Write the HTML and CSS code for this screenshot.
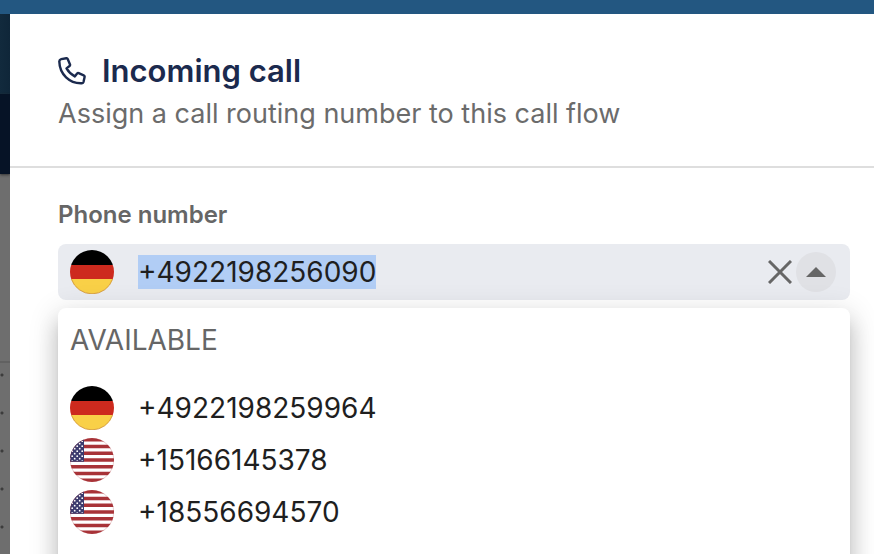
FILE: index.html
```html
<!DOCTYPE html>
<html lang="en">
<head>
<meta charset="utf-8">
<meta name="viewport" content="width=device-width, initial-scale=1">
<title>Incoming call</title>
<link rel="stylesheet" href="styles.css">
</head>
<body>
<svg class="defs" aria-hidden="true">
  <defs>
    <clipPath id="disc"><circle cx="22" cy="22" r="22"/></clipPath>
    <pattern id="stars" width="5" height="5" patternUnits="userSpaceOnUse" patternTransform="translate(1 2)">
      <rect width="5" height="5" fill="#3c3b6e"/>
      <circle cx="1.2" cy="1.2" r=".9" fill="#fff"/>
      <circle cx="3.7" cy="3.7" r=".9" fill="#fff"/>
    </pattern>
    <symbol id="flag-de" viewBox="0 0 44 44">
      <g clip-path="url(#disc)">
        <path fill="#000" d="M0 0h44v15H0z"/>
        <path fill="#cd2a1e" d="M0 15h44v14H0z"/>
        <path fill="#f9d047" d="M0 29h44v15H0z"/>
      </g>
      <path fill="none" stroke="#c98a3c" stroke-width=".7" d="M1.4 29A21.7 21.7 0 0 0 42.6 29"/>
    </symbol>
    <symbol id="flag-us" viewBox="0 0 44 44">
      <g clip-path="url(#disc)">
        <path fill="#fff" d="M0 0h44v44H0z"/>
        <path stroke="#a83338" stroke-width="3.38" d="M0 1.7h44M0 8.5h44M0 15.2h44M0 22h44M0 28.8h44M0 35.5h44M0 42.3h44"/>
        <path fill="#3c3b6e" d="M0 0h14v23.7H0z"/>
        <path fill="url(#stars)" d="M0 3h13v20H0z"/>
      </g>
      <circle cx="22" cy="22" r="21.7" fill="none" stroke="#a83338" stroke-opacity=".4" stroke-width=".6"/>
    </symbol>
  </defs>
</svg>

<div class="topbar"></div>
<div class="stage">
  <div class="backdrop">
    <div class="backdrop-header"></div>
    <div class="backdrop-subheader"></div>
    <div class="backdrop-toolbar"></div>
    <div class="backdrop-canvas"></div>
  </div>
  <main class="panel">
    <header class="panel-header">
      <h1 class="title">
        <svg class="phone" viewBox="0 0 28 28" aria-hidden="true"><path d="M3.2 2.1 8.3 1.2Q9.3 1.1 9.7 2.1L12 7.4Q12.3 8.3 11.5 9L8.5 11.4Q11.6 16.7 16.8 19.4L19.1 16.5Q19.8 15.8 20.7 16.2L25.7 18.4Q26.8 18.9 26.6 19.9L25.5 25Q25.2 26.2 24 26.2C11.5 26.8 1.6 17.2 1.3 4.4Q1.4 2.5 3.2 2.1Z"/></svg>
        <span>Incoming call</span>
      </h1>
      <p class="subtitle">Assign a call routing number to this call flow</p>
    </header>
    <section class="panel-body">
      <label class="label" for="number">Phone number</label>
      <div class="combo">
        <div class="field">
          <svg class="flag" aria-hidden="true"><use href="#flag-de"/></svg>
          <input class="input" id="number" type="text" role="combobox" aria-expanded="true" aria-controls="numbers" autocomplete="off" spellcheck="false" value="+4922198256090">
          <button class="clear" type="button" aria-label="Clear"><svg viewBox="0 0 24 24"><path d="M1 1l22 22M23 1 1 23"/></svg></button>
          <button class="toggle" type="button" aria-label="Close"><svg viewBox="0 0 20 10"><path d="M0 10 10 0l10 10z"/></svg></button>
        </div>
        <div class="menu">
          <div class="group" id="group">AVAILABLE</div>
          <ul class="options" id="numbers" role="listbox" aria-labelledby="group">
            <li class="option" role="option"><svg class="flag" aria-hidden="true"><use href="#flag-de"/></svg><span>+4922198259964</span></li>
            <li class="option" role="option"><svg class="flag" aria-hidden="true"><use href="#flag-us"/></svg><span>+15166145378</span></li>
            <li class="option" role="option"><svg class="flag" aria-hidden="true"><use href="#flag-us"/></svg><span>+18556694570</span></li>
          </ul>
        </div>
      </div>
    </section>
  </main>
</div>
<script src="script.js"></script>
</body>
</html>
```
FILE: styles.css
```css
* { box-sizing: border-box; }

body {
  margin: 0;
  height: 100vh;
  display: flex;
  flex-direction: column;
  overflow: hidden;
  background: #fff;
  color: #1f1f1f;
  font-family: Inter, "Liberation Sans", sans-serif;
  font-size: 28px;
  line-height: 34px;
}

.defs { position: absolute; width: 0; height: 0; }

.topbar { flex: none; height: 14px; background: #235781; }

.stage { flex: 1; display: flex; min-height: 0; }

.backdrop {
  flex: none;
  width: 10px;
  display: flex;
  flex-direction: column;
  background: #6e6e6e;
}
.backdrop-header { flex: none; height: 80px; background: linear-gradient(to right, #122a3d, #0f2639); }
.backdrop-subheader { flex: none; height: 80px; background: #061326; box-shadow: 0 1px 3px #333; }
.backdrop-toolbar { flex: none; height: 189px; border-bottom: 2px solid #616161; }
.backdrop-canvas {
  flex: 1;
  background: radial-gradient(circle at 2px 12px, #3c3c3c 1px, transparent 2px) 0 0 / 38px 38px;
}

.panel { flex: 1; min-width: 0; overflow: hidden; background: #fff; }

.panel-header {
  padding: 37px 48px 35px;
  border-bottom: 2px solid #dedede;
}
.title {
  display: flex;
  align-items: center;
  gap: 16px;
  margin: 0;
  color: #1b2a4e;
  font-size: 31px;
  font-weight: 600;
  line-height: 40px;
}
.phone {
  width: 28px;
  height: 28px;
  fill: none;
  stroke: currentColor;
  stroke-width: 2.4;
  stroke-linejoin: round;
}
.subtitle { margin: 6px 0 0; color: #6b6b6b; font-size: 27px; }

.panel-body { padding: 32px 24px 0 48px; }
.label {
  display: block;
  margin-bottom: 14px;
  color: #666;
  font-size: 24px;
  font-weight: 600;
  line-height: 30px;
}

.combo { position: relative; }
.field {
  display: flex;
  align-items: center;
  height: 56px;
  padding: 0 14px 0 12px;
  border-radius: 8px;
  background: #e9ebf0;
}
.flag { flex: none; width: 44px; height: 44px; margin-right: 24px; }
.input {
  flex: 1;
  min-width: 0;
  height: 34px;
  padding: 0;
  border: 0;
  outline: 0;
  background: none;
  color: #1f1f1f;
  caret-color: transparent;
  font: inherit;
}
.input::selection { background: #b1cdf5; color: #1f1f1f; }

button {
  flex: none;
  display: grid;
  place-items: center;
  padding: 0;
  border: 0;
  background: none;
  color: #666;
}
.clear svg { width: 24px; height: 24px; fill: none; stroke: currentColor; stroke-width: 3; }
.toggle {
  width: 40px;
  height: 40px;
  margin-left: 4px;
  border-radius: 50%;
  background: #e0e1e5;
}
.toggle svg { width: 20px; height: 10px; fill: currentColor; }

.menu {
  position: absolute;
  top: 100%;
  left: 0;
  right: 0;
  margin-top: 8px;
  padding-bottom: 48px;
  border-radius: 8px;
  background: #fff;
  box-shadow:
    0 10px 10px -6px rgba(0, 0, 0, .2),
    0 16px 20px 2px rgba(0, 0, 0, .14),
    0 6px 28px 4px rgba(0, 0, 0, .12);
}
.group { padding: 0 12px; color: #666; line-height: 64px; }
.options { margin: 0; padding: 10px 0 0; list-style: none; }
.option { display: flex; align-items: center; height: 52px; padding: 0 12px; }
```
FILE: script.js
```js
const input = document.getElementById("number");
input.focus();
input.select();
```
